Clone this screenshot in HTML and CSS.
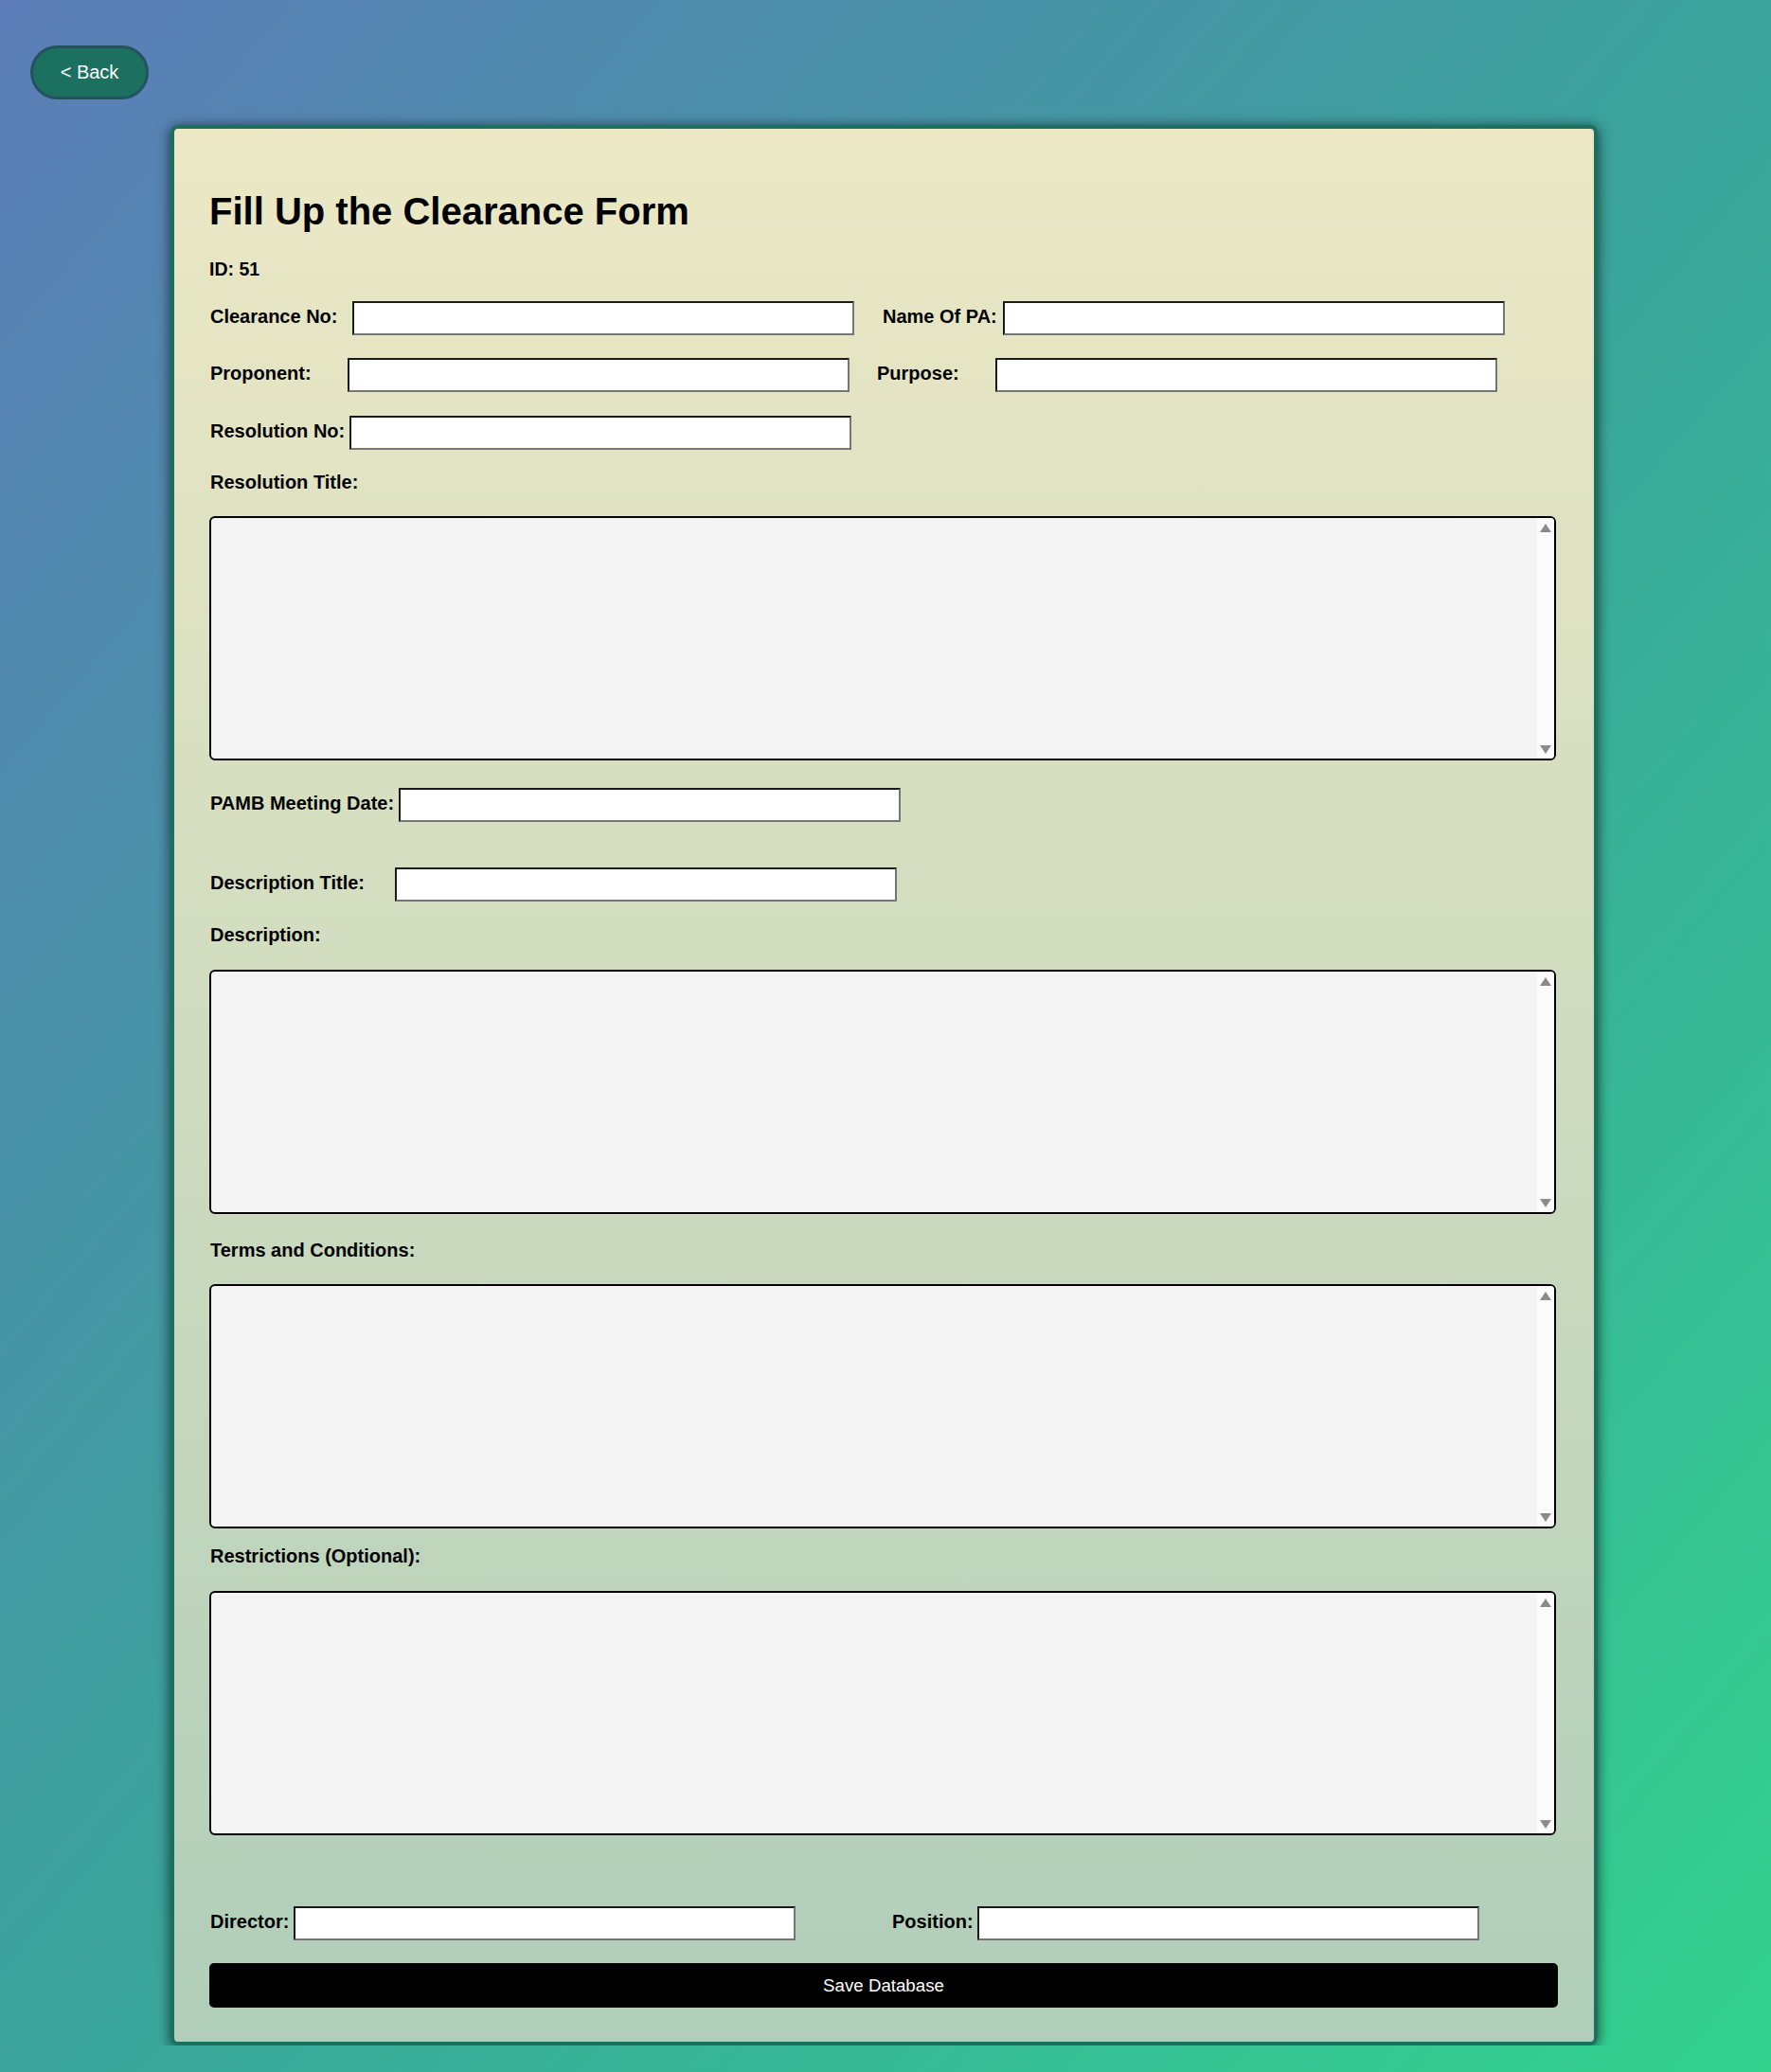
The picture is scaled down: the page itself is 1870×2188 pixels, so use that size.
FILE: index.html
```html
<!DOCTYPE html>
<html lang="en">
<head>
<meta charset="utf-8">
<title>Fill Up the Clearance Form</title>
<link rel="stylesheet" href="styles.css">
</head>
<body>
<header class="topbar">
  <a class="back-btn" href="#">&lt; Back</a>
</header>
<main class="card">
  <h1 class="title">Fill Up the Clearance Form</h1>
  <p class="record-id">ID: 51</p>

  <div class="row row-first">
    <div class="field">
      <label class="lbl w-clearance" for="clearance">Clearance No:</label>
      <input class="text-input" id="clearance" type="text">
    </div>
    <div class="field field-second">
      <label class="lbl w-pa" for="pa">Name Of PA:</label>
      <input class="text-input" id="pa" type="text">
    </div>
  </div>

  <div class="row row-second">
    <div class="field">
      <label class="lbl w-proponent" for="proponent">Proponent:</label>
      <input class="text-input" id="proponent" type="text">
    </div>
    <div class="field field-second field-purpose">
      <label class="lbl w-purpose" for="purpose">Purpose:</label>
      <input class="text-input" id="purpose" type="text">
    </div>
  </div>

  <div class="row row-third">
    <div class="field">
      <label class="lbl w-resolution" for="resno">Resolution No:</label>
      <input class="text-input" id="resno" type="text">
    </div>
  </div>

  <label class="block-lbl lbl-restitle" for="restitle">Resolution Title:</label>
  <div class="area-wrap">
    <textarea class="area" id="restitle"></textarea>
    <span class="vscroll" aria-hidden="true"><span class="arrow arrow-up"></span><span class="arrow arrow-down"></span></span>
  </div>

  <div class="row row-pamb">
    <div class="field">
      <label class="lbl w-pamb" for="pamb">PAMB Meeting Date:</label>
      <input class="text-input" id="pamb" type="text">
    </div>
  </div>

  <div class="row row-desctitle">
    <div class="field">
      <label class="lbl w-desctitle" for="desctitle">Description Title:</label>
      <input class="text-input" id="desctitle" type="text">
    </div>
  </div>

  <label class="block-lbl lbl-desc" for="desc">Description:</label>
  <div class="area-wrap wrap-25">
    <textarea class="area" id="desc"></textarea>
    <span class="vscroll" aria-hidden="true"><span class="arrow arrow-up"></span><span class="arrow arrow-down"></span></span>
  </div>

  <label class="block-lbl lbl-terms" for="terms">Terms and Conditions:</label>
  <div class="area-wrap">
    <textarea class="area" id="terms"></textarea>
    <span class="vscroll" aria-hidden="true"><span class="arrow arrow-up"></span><span class="arrow arrow-down"></span></span>
  </div>

  <label class="block-lbl lbl-restr" for="restr">Restrictions (Optional):</label>
  <div class="area-wrap wrap-25">
    <textarea class="area" id="restr"></textarea>
    <span class="vscroll" aria-hidden="true"><span class="arrow arrow-up"></span><span class="arrow arrow-down"></span></span>
  </div>

  <div class="row row-director">
    <div class="field">
      <label class="lbl w-director" for="director">Director:</label>
      <input class="text-input" id="director" type="text">
    </div>
    <div class="field field-position">
      <label class="lbl w-position" for="position">Position:</label>
      <input class="text-input" id="position" type="text">
    </div>
  </div>

  <button class="save-btn" type="button">Save Database</button>
</main>
</body>
</html>
```

FILE: styles.css
```css
html {
  min-height: 100%;
  background: linear-gradient(to bottom right, #5c7db8 0%, #3aa39b 50%, #33d28f 100%);
}

body {
  margin: 0;
  font-family: "Liberation Sans", Arial, sans-serif;
  color: #000;
}

.topbar {
  padding: 48px 32px 0;
  display: flex;
}

.back-btn {
  box-sizing: border-box;
  width: 125px;
  height: 57px;
  display: inline-flex;
  align-items: center;
  justify-content: center;
  background: #1b7060;
  border: 3px solid #25525d;
  border-radius: 30px;
  color: #fff;
  font-size: 20px;
  text-decoration: none;
}

.card {
  box-sizing: border-box;
  width: 1507px;
  margin: 27px 0 0 180px;
  padding: 38px 38px 36px 37px;
  border: 4px solid #1b7060;
  border-radius: 8px;
  background: linear-gradient(to bottom, #ece8c5, #b0ceb9);
  box-shadow: 0 2px 14px rgba(0, 0, 0, 0.65);
  display: flex;
  flex-direction: column;
}

.title {
  margin: 26px 0 0;
  font-size: 40px;
  line-height: 46px;
  font-weight: bold;
}

.record-id {
  margin: 27px 0 0;
  font-size: 19.5px;
  line-height: 22px;
  font-weight: bold;
}

.row {
  display: flex;
  align-items: center;
}

.row-first { margin-top: 23px; }
.row-second { margin-top: 24px; }
.row-third { margin-top: 25px; }
.row-pamb { margin-top: 29px; }
.row-desctitle { margin-top: 48px; }
.row-director { margin-top: 75px; }

.field {
  display: flex;
  align-items: center;
}

.field-second { margin-left: 29px; }
.field-purpose { margin-left: 28px; }
.field-position { margin-left: 101px; }

.lbl,
.block-lbl {
  font-size: 20px;
  line-height: 23px;
  font-weight: bold;
  white-space: nowrap;
  padding-left: 1px;
  box-sizing: border-box;
  flex-shrink: 0;
}

.lbl { margin-bottom: 3px; }

.w-clearance { width: 151px; }
.w-pa { width: 128px; }
.w-proponent { width: 146px; }
.w-purpose { width: 126px; }
.w-resolution { width: 148px; }
.w-pamb { width: 200px; }
.w-desctitle { width: 196px; }
.w-director { width: 89px; }
.w-position { width: 91px; }

.text-input {
  box-sizing: border-box;
  width: 530px;
  height: 36px;
  margin: 0;
  padding: 2px 4px;
  background: #fff;
  border: 2px solid;
  border-color: #1a1a1a #767676 #767676 #1a1a1a;
  border-radius: 0;
  font-family: inherit;
  font-size: 16px;
}

.block-lbl { display: block; }
.lbl-restitle { margin-top: 23px; }
.lbl-desc { margin-top: 24px; }
.lbl-terms { margin-top: 27px; }
.lbl-restr { margin-top: 18px; }

.area-wrap {
  position: relative;
  width: 1422px;
  margin-top: 24px;
}

.wrap-25 { margin-top: 25px; }

.area {
  box-sizing: border-box;
  display: block;
  width: 100%;
  height: 258px;
  margin: 0;
  padding: 4px 24px 4px 4px;
  background: #f4f4f4;
  border: 2px solid #000;
  border-radius: 6px;
  resize: none;
  overflow: hidden;
  font-family: inherit;
  font-size: 16px;
}

.vscroll {
  position: absolute;
  top: 2px;
  right: 2px;
  bottom: 2px;
  width: 18px;
  background: #fbfbfb;
  border-radius: 0 4px 4px 0;
  pointer-events: none;
}

.arrow {
  position: absolute;
  left: 3px;
  width: 12px;
  height: 9px;
  background: #8b8b8b;
}

.arrow-up {
  top: 6px;
  clip-path: polygon(50% 0, 100% 100%, 0 100%);
}

.arrow-down {
  bottom: 5px;
  clip-path: polygon(0 0, 100% 0, 50% 100%);
}

.save-btn {
  box-sizing: border-box;
  width: 1424px;
  height: 47px;
  margin-top: 24px;
  padding: 0;
  border: none;
  border-radius: 5px;
  background: #000;
  color: #fff;
  font-family: inherit;
  font-size: 18.7px;
  cursor: pointer;
}
```
